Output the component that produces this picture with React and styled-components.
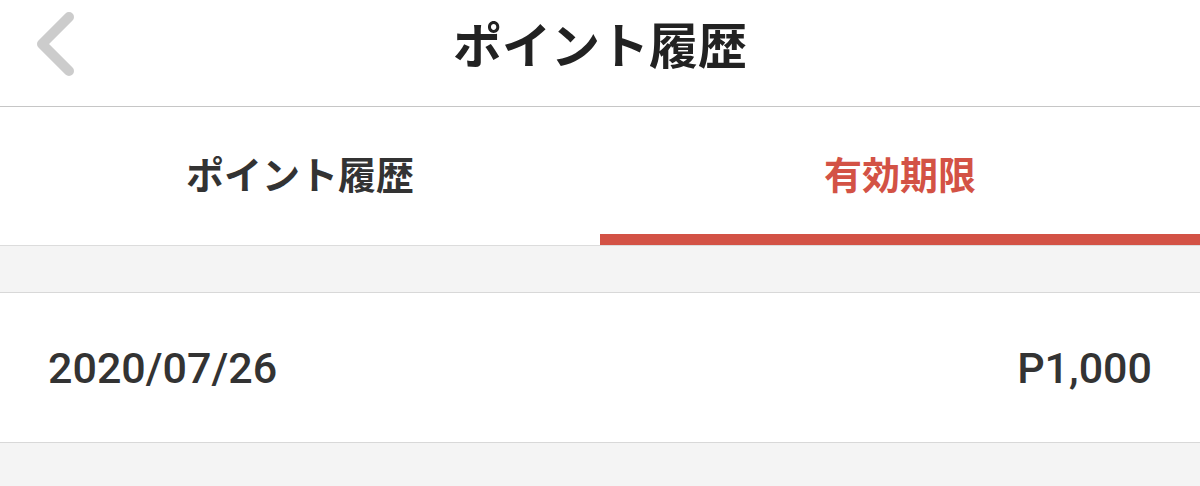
import React from "react";
import styled, { createGlobalStyle } from "styled-components";

const Global = createGlobalStyle`
  html, body { margin: 0; padding: 0; background: #f4f4f4; }
  body { font-family: Roboto, "Noto Sans CJK JP", sans-serif; }
`;

const Page = styled.div`
  width: 1200px;
  height: 486px;
  overflow: hidden;
  background: #f4f4f4;
  display: flex;
  flex-direction: column;
`;

const Header = styled.header`
  position: relative;
  height: 106px;
  background: #fff;
  border-bottom: 1px solid #c6c6c6;
  display: flex;
  align-items: center;
  justify-content: center;
`;

const BackButton = styled.button`
  position: absolute;
  left: 30px;
  top: 8px;
  width: 52px;
  height: 72px;
  padding: 0;
  border: 0;
  background: transparent;
  display: flex;
  align-items: center;
  justify-content: center;
`;

const Title = styled.h1`
  margin: 0;
  margin-top: -22px;
  font-family: "Noto Sans CJK JP", sans-serif;
  font-size: 49px;
  font-weight: 700;
  color: #222;
  letter-spacing: 0;
`;

const Tabs = styled.nav`
  display: flex;
  height: 138px;
  background: #fff;
  border-bottom: 1px solid #dcdcdc;
`;

const Tab = styled.div`
  flex: 1;
  display: flex;
  align-items: center;
  justify-content: center;
  padding-top: 4px;
  font-family: "Noto Sans CJK JP", sans-serif;
  font-size: 38px;
  font-weight: 700;
  color: ${(p) => (p.$active ? "#d35245" : "#333")};
  border-bottom: 11px solid ${(p) => (p.$active ? "#d35245" : "transparent")};
`;

const Spacer = styled.div`
  height: 46px;
  background: #f4f4f4;
  border-bottom: 1px solid #d8d8d8;
`;

const Row = styled.div`
  height: 149px;
  background: #fff;
  border-bottom: 1px solid #d8d8d8;
  display: flex;
  align-items: center;
  justify-content: space-between;
  padding: 0 48px;
  font-family: Roboto, "Noto Sans CJK JP", sans-serif;
  font-size: 43px;
  font-weight: 500;
  color: #333;
`;

const Cell = styled.span`
  margin-top: 0;
`;

export default function App() {
  return (
    <Page>
      <Global />
      <Header>
        <BackButton aria-label="戻る">
          <svg width="52" height="72" viewBox="0 0 52 72">
            <polyline
              points="39,9 12,36 39,63"
              fill="none"
              stroke="#cccccc"
              strokeWidth="10"
              strokeLinecap="round"
              strokeLinejoin="round"
            />
          </svg>
        </BackButton>
        <Title>ポイント履歴</Title>
      </Header>
      <Tabs>
        <Tab>ポイント履歴</Tab>
        <Tab $active>有効期限</Tab>
      </Tabs>
      <Spacer />
      <Row>
        <Cell>2020/07/26</Cell>
        <Cell>P1,000</Cell>
      </Row>
    </Page>
  );
}
